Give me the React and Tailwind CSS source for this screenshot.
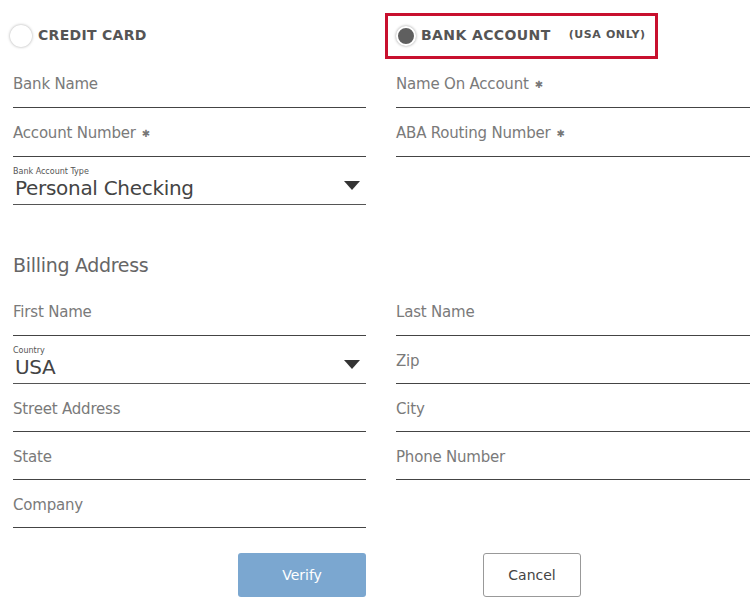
import React from 'react';

const font = { fontFamily: '"DejaVu Sans", "Liberation Sans", sans-serif' };

function Field({ label, required, short }) {
  return (
    <div className={`${short ? 'h-[48px] pt-[4px]' : 'h-[49px] pt-[2px]'} border-b border-[#444] flex items-center`}>
      <span className="text-[15px] text-[#7a7a7a] tracking-[-0.2px]">{label}</span>
      {required && <span className="ml-[6px] text-[10px] text-[#777]">✱</span>}
    </div>
  );
}

function SelectField({ label, value }) {
  return (
    <div className="h-[48px] border-b border-[#555] flex flex-col justify-start pt-[10px] relative">
      <span className="text-[8px] leading-[9px] text-[#555]">{label}</span>
      <span className="text-[20px] leading-[24px] text-[#444] ml-[2px] tracking-[-0.3px]">{value}</span>
      <svg className="absolute right-[6px] top-[24px]" width="16" height="9" viewBox="0 0 16 9">
        <path d="M0 0 L16 0 L8 9 Z" fill="#333" />
      </svg>
    </div>
  );
}

function Row({ children }) {
  return <div className="grid grid-cols-[353px_354px] gap-x-[30px]">{children}</div>;
}

export default function App() {
  return (
    <div className="w-[755px] h-[612px] bg-white pl-[13px] pr-[5px]" style={font}>
      <Row>
        <div className="h-[59px] flex items-center -ml-[3px] pt-[12px]">
          <span className="w-[22px] h-[22px] rounded-full bg-white shadow-[0_0_3px_rgba(0,0,0,0.35)]" />
          <span className="ml-[6px] text-[14px] font-bold text-[#555] tracking-[0.3px] whitespace-nowrap">CREDIT CARD</span>
        </div>
        <div className="h-[59px] flex items-start -ml-[11px] pt-[13px]">
          <div className="w-[273px] h-[46px] border-[3px] border-[#c8102e] flex items-center pl-[8px] pb-[1px] whitespace-nowrap">
            <span className="shrink-0 w-[20px] h-[20px] rounded-full bg-[#5f5f5f] border-2 border-white shadow-[0_0_3px_rgba(0,0,0,0.4)]" />
            <span className="ml-[5px] text-[14px] font-bold text-[#555] tracking-[0.4px]">BANK ACCOUNT</span>
            <span className="ml-[18px] text-[11px] font-bold text-[#555] tracking-[0.6px]">(USA ONLY)</span>
          </div>
        </div>
      </Row>
      <Row>
        <Field label="Bank Name" />
        <Field label="Name On Account" required />
      </Row>
      <Row>
        <Field label="Account Number" required />
        <Field label="ABA Routing Number" required />
      </Row>
      <Row>
        <SelectField label="Bank Account Type" value="Personal Checking" />
        <div />
      </Row>
      <div className="h-[82px] flex items-center pt-[38px]">
        <span className="text-[19px] text-[#666] tracking-[-0.3px]">Billing Address</span>
      </div>
      <Row>
        <Field label="First Name" />
        <Field label="Last Name" />
      </Row>
      <Row>
        <SelectField label="Country" value="USA" />
        <Field label="Zip" short />
      </Row>
      <Row>
        <Field label="Street Address" short />
        <Field label="City" short />
      </Row>
      <Row>
        <Field label="State" short />
        <Field label="Phone Number" short />
      </Row>
      <Row>
        <Field label="Company" short />
        <div />
      </Row>
      <Row>
        <div className="flex justify-end pt-[25px]">
          <button className="w-[128px] h-[44px] rounded-[3px] bg-[#7ba7d0] text-white text-[14px]">Verify</button>
        </div>
        <div className="pt-[25px] pl-[87px]">
          <button className="w-[98px] h-[44px] rounded-[3px] border border-[#999] bg-white text-[#444] text-[14px]">Cancel</button>
        </div>
      </Row>
    </div>
  );
}
